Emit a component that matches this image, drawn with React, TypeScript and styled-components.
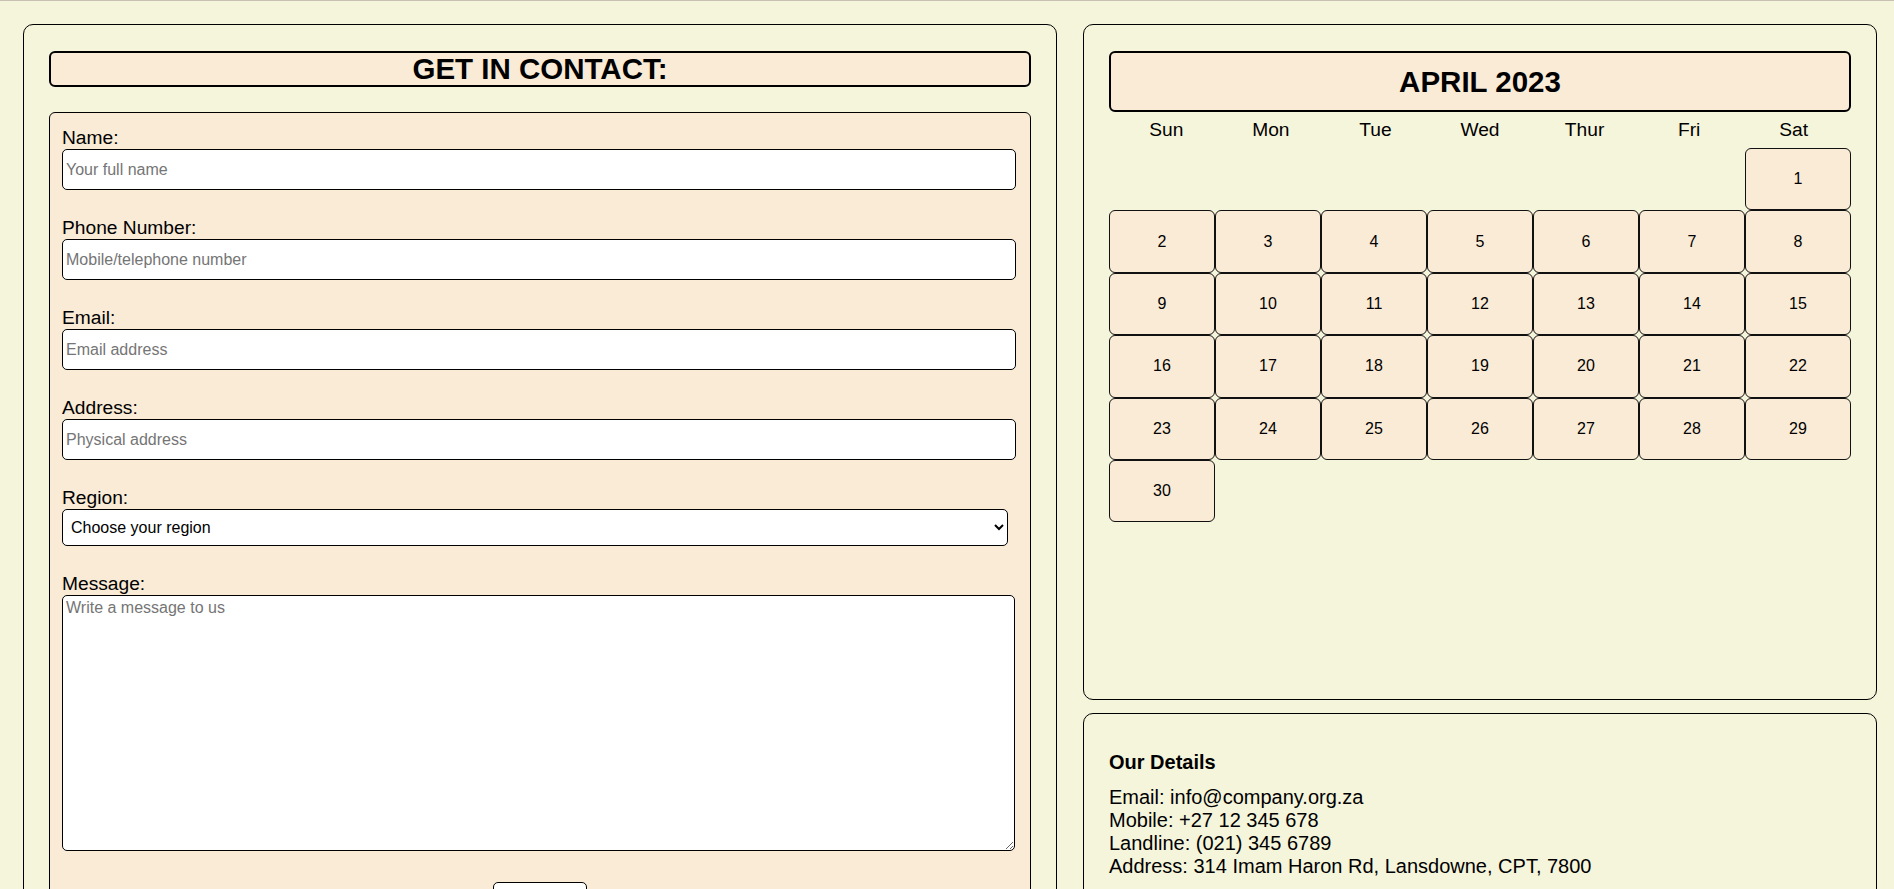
import React from "react";
import styled, { createGlobalStyle } from "styled-components";

const GlobalStyle = createGlobalStyle`
  html, body {
    margin: 0;
    padding: 0;
    background: #f5f5dc;
    overflow: hidden;
    font-family: "Liberation Sans", Arial, sans-serif;
    color: #000;
  }
  * { box-sizing: border-box; }
`;

const TopRule = styled.div`
  height: 1px;
  background: #c8c0b2;
`;

const Page = styled.div`
  display: grid;
  grid-template-columns: 1034px 794px;
  column-gap: 26px;
  padding: 23px 0 0 23px;
  align-items: start;
`;

const Panel = styled.section<{ $height?: number }>`
  border: 1px solid #000;
  border-radius: 10px;
  padding: 26px 25px;
  ${(p) => (p.$height ? `height: ${p.$height}px;` : "")}
`;

const Heading = styled.h1<{ $tall?: boolean }>`
  margin: 0;
  border: 2px solid #000;
  border-radius: 6px;
  background: #faebd7;
  font-size: 29.5px;
  font-weight: bold;
  text-align: center;
  line-height: ${(p) => (p.$tall ? "57px" : "32px")};
`;

const ContactHeading = styled(Heading)`
  margin-bottom: 25px;
`;

const Form = styled.form`
  display: flex;
  flex-direction: column;
  border: 1px solid #000;
  border-radius: 6px;
  background: #faebd7;
  padding: 13px 12px 24px;
`;

const Field = styled.div`
  display: flex;
  flex-direction: column;
  margin-bottom: 26px;
`;

const Label = styled.label`
  font-size: 19.2px;
  line-height: 23px;
`;

const TextInput = styled.input`
  width: calc(100% - 2px);
  height: 41px;
  border: 1px solid #000;
  border-radius: 5px;
  background: #fff;
  padding: 0 3px;
  font-family: "Liberation Sans", Arial, sans-serif;
  font-size: 16px;
  &::placeholder { color: #757575; }
`;

const Select = styled.select`
  width: calc(100% - 10px);
  height: 37px;
  border: 1px solid #000;
  border-radius: 5px;
  background: #fff;
  padding: 0 4px;
  font-family: "Liberation Sans", Arial, sans-serif;
  font-size: 16px;
  color: #000;
`;

const TextArea = styled.textarea`
  width: calc(100% - 3px);
  height: 256px;
  border: 1px solid #000;
  border-radius: 5px;
  background: #fff;
  padding: 3px;
  font-family: "Liberation Sans", Arial, sans-serif;
  font-size: 16px;
  &::placeholder { color: #757575; }
`;

const SubmitButton = styled.button`
  align-self: center;
  margin-top: 31px;
  width: 94px;
  height: 34px;
  border: 1px solid #000;
  border-radius: 5px;
  background: #fff;
  font-family: "Liberation Sans", Arial, sans-serif;
  font-size: 16px;
`;

const RightColumn = styled.div`
  display: flex;
  flex-direction: column;
  gap: 13px;
`;

const DayRow = styled.div`
  display: grid;
  grid-template-columns: repeat(7, 1fr);
  height: 36px;
  padding: 0 5px;
  align-items: center;
  text-align: center;
  font-size: 19.2px;
`;

const DayGrid = styled.div`
  display: grid;
  grid-template-columns: repeat(7, 1fr);
  grid-auto-rows: 62.4px;
`;

const DayCell = styled.div<{ $start?: number }>`
  display: flex;
  align-items: center;
  justify-content: center;
  border: 1px solid #111;
  border-radius: 6px;
  background: #faebd7;
  font-size: 16px;
  ${(p) => (p.$start ? `grid-column-start: ${p.$start};` : "")}
`;

const DetailsTitle = styled.h4`
  margin: 11px 0 12px;
  font-size: 20px;
  line-height: 23px;
  font-weight: bold;
`;

const DetailsLine = styled.div`
  font-size: 20px;
  line-height: 23px;
`;

const fields = [
  { id: "name", label: "Name:", placeholder: "Your full name" },
  { id: "phone", label: "Phone Number:", placeholder: "Mobile/telephone number" },
  { id: "email", label: "Email:", placeholder: "Email address" },
  { id: "address", label: "Address:", placeholder: "Physical address" },
];

const dayNames = ["Sun", "Mon", "Tue", "Wed", "Thur", "Fri", "Sat"];
const days = Array.from({ length: 30 }, (_, i) => i + 1);

export default function App() {
  return (
    <>
      <GlobalStyle />
      <TopRule />
      <Page>
        <Panel>
          <ContactHeading>GET IN CONTACT:</ContactHeading>
          <Form onSubmit={(e) => e.preventDefault()}>
            {fields.map((f) => (
              <Field key={f.id}>
                <Label htmlFor={f.id}>{f.label}</Label>
                <TextInput id={f.id} placeholder={f.placeholder} />
              </Field>
            ))}
            <Field>
              <Label htmlFor="region">Region:</Label>
              <Select id="region" defaultValue="">
                <option value="">Choose your region</option>
                <option value="wc">Western Cape</option>
                <option value="ec">Eastern Cape</option>
                <option value="gp">Gauteng</option>
              </Select>
            </Field>
            <Label htmlFor="message">Message:</Label>
            <TextArea id="message" placeholder="Write a message to us" />
            <SubmitButton type="submit">Submit</SubmitButton>
          </Form>
        </Panel>
        <RightColumn>
          <Panel $height={676}>
            <Heading $tall>APRIL 2023</Heading>
            <DayRow>
              {dayNames.map((d) => (
                <span key={d}>{d}</span>
              ))}
            </DayRow>
            <DayGrid>
              {days.map((d) => (
                <DayCell key={d} $start={d === 1 ? 7 : undefined}>
                  {d}
                </DayCell>
              ))}
            </DayGrid>
          </Panel>
          <Panel>
            <DetailsTitle>Our Details</DetailsTitle>
            <DetailsLine>Email: info@company.org.za</DetailsLine>
            <DetailsLine>Mobile: +27 12 345 678</DetailsLine>
            <DetailsLine>Landline: (021) 345 6789</DetailsLine>
            <DetailsLine>Address: 314 Imam Haron Rd, Lansdowne, CPT, 7800</DetailsLine>
          </Panel>
        </RightColumn>
      </Page>
    </>
  );
}
